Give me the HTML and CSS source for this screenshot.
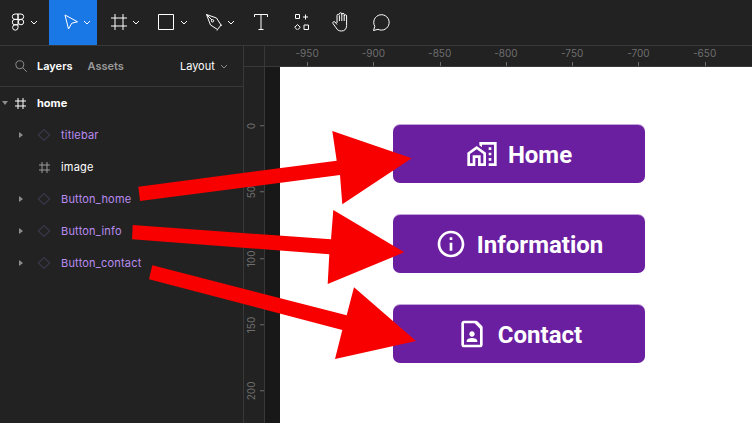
FILE: index.html
```html
<!DOCTYPE html>
<html lang="en">
<head>
    <meta charset="UTF-8">
    <meta name="viewport" content="width=device-width, initial-scale=1.0">
    <title>Figma - home</title>
    <link rel="stylesheet" href="styles.css">
</head>
<body>
    <div class="toolbar">
        <div class="tool tool-logo">
            <svg class="tool-icon" width="18" height="18" viewBox="0 0 18 18"><path d="M9 1H6a2.7 2.7 0 0 0 0 5.4h3zM9 1h3a2.7 2.7 0 0 1 0 5.4H9zM9 6.4H6a2.7 2.7 0 0 0 0 5.4h3zM14.7 9.100a2.700 2.700 0 1 1-5.400 0 2.700 2.700 0 0 1 5.400 0zM9 11.800H6a2.700 2.700 0 1 0 3 2.700z"/></svg>
            <svg class="chevron" width="8" height="5" viewBox="0 0 8 5"><path d="M1 1l3 3 3-3"/></svg>
        </div>
        <div class="tool tool-move">
            <svg class="tool-icon" width="16" height="16" viewBox="0 0 16 16"><path d="M2 1l12.500 6.800-5.700 1.400L5.500 15z"/></svg>
            <svg class="chevron" width="8" height="5" viewBox="0 0 8 5"><path d="M1 1l3 3 3-3"/></svg>
        </div>
        <div class="tool tool-frame">
            <svg class="tool-icon" width="16" height="16" viewBox="0 0 16 16"><path d="M4 0v16M12 0v16M0 4h16M0 12h16"/></svg>
            <svg class="chevron" width="8" height="5" viewBox="0 0 8 5"><path d="M1 1l3 3 3-3"/></svg>
        </div>
        <div class="tool tool-rect">
            <svg class="tool-icon" width="16" height="16" viewBox="0 0 16 16"><path d="M.5.5h15v15H.5z"/></svg>
            <svg class="chevron" width="8" height="5" viewBox="0 0 8 5"><path d="M1 1l3 3 3-3"/></svg>
        </div>
        <div class="tool tool-pen">
            <svg class="tool-icon" width="16" height="17" viewBox="0 0 16 17"><path d="M.5.500l10 3.500 4.500 7-3.500 4.500-7-4.500zM.5.500l5.500 5.500M11.500 15.500l-.5 1M15 11l1 .5"/><circle cx="6.500" cy="6.800" r="1.200"/></svg>
            <svg class="chevron" width="8" height="5" viewBox="0 0 8 5"><path d="M1 1l3 3 3-3"/></svg>
        </div>
        <div class="tool tool-text">
            <svg class="tool-icon" width="14" height="16" viewBox="0 0 14 16"><path d="M.5 3V.5h13V3M7 .5v15M4.500 15.500h5"/></svg>
        </div>
        <div class="tool tool-components">
            <svg class="tool-icon" width="16" height="16" viewBox="0 0 16 16"><path d="M1.500.5h4v4h-4zM11.500.5v5M9 3h5M3.500 10.500l2.800 2.800-2.800 2.700-2.800-2.700zM10 11h4.500v4.500H10z"/></svg>
        </div>
        <div class="tool tool-hand">
            <svg class="tool-icon" width="18" height="20" viewBox="0 0 18 20"><path d="M5 11V3.500a1.200 1.200 0 0 1 2.400 0V9m0-7a1.200 1.200 0 0 1 2.400 0v7m0-6.500a1.200 1.200 0 0 1 2.400 0V9m0-5a1.200 1.200 0 0 1 2.400 0v9.500c0 3.500-2 5.500-5 5.500-3 0-4.300-1-5.500-3.200L1 11.500c-.8-1.500 1-2.500 2-1.500l2 2.500"/></svg>
        </div>
        <div class="tool tool-comment">
            <svg class="tool-icon" width="18" height="17" viewBox="0 0 18 17"><path d="M1.500 16.500l1.300-4.200A7.700 7.700 0 1 1 6 15.300z"/></svg>
        </div>
    </div>

    <div class="workspace">
        <div class="panel">
            <div class="panel-tabs">
                <svg class="search-icon" width="12" height="12" viewBox="0 0 12 12"><circle cx="4.800" cy="4.800" r="4"/><path d="M7.800 7.800l4 4"/></svg>
                <span class="tab tab-active">Layers</span>
                <span class="tab">Assets</span>
                <span class="tab-layout">Layout</span>
                <svg class="chevron chevron-dim" width="8" height="5" viewBox="0 0 8 5"><path d="M1 1l3 3 3-3"/></svg>
            </div>
            <div class="layers">
                <div class="layer layer-root">
                    <span class="caret caret-down"></span>
                    <svg class="frame-icon" width="11" height="11" viewBox="0 0 11 11"><path d="M3 0v11M8 0v11M0 3h11M0 8h11"/></svg>
                    <span class="layer-name">home</span>
                </div>
                <div class="layer">
                    <span class="caret"></span>
                    <svg class="diamond" width="12" height="12" viewBox="0 0 12 12"><path d="M6 .5L11.500 6 6 11.500.5 6z"/></svg>
                    <span class="layer-name comp">titlebar</span>
                </div>
                <div class="layer">
                    <span class="caret caret-none"></span>
                    <svg class="frame-icon frame-dim" width="11" height="11" viewBox="0 0 11 11"><path d="M3 0v11M8 0v11M0 3h11M0 8h11"/></svg>
                    <span class="layer-name">image</span>
                </div>
                <div class="layer">
                    <span class="caret"></span>
                    <svg class="diamond" width="12" height="12" viewBox="0 0 12 12"><path d="M6 .5L11.500 6 6 11.500.5 6z"/></svg>
                    <span class="layer-name comp">Button_home</span>
                </div>
                <div class="layer">
                    <span class="caret"></span>
                    <svg class="diamond" width="12" height="12" viewBox="0 0 12 12"><path d="M6 .5L11.500 6 6 11.500.5 6z"/></svg>
                    <span class="layer-name comp">Button_info</span>
                </div>
                <div class="layer">
                    <span class="caret"></span>
                    <svg class="diamond" width="12" height="12" viewBox="0 0 12 12"><path d="M6 .5L11.500 6 6 11.500.5 6z"/></svg>
                    <span class="layer-name comp">Button_contact</span>
                </div>
            </div>
        </div>

        <div class="canvas">
            <div class="ruler-top">
                <div class="ruler-corner"></div>
                <div class="mark">-950</div>
                <div class="mark">-900</div>
                <div class="mark">-850</div>
                <div class="mark">-800</div>
                <div class="mark">-750</div>
                <div class="mark">-700</div>
                <div class="mark">-650</div>
            </div>
            <div class="canvas-body">
                <div class="ruler-left">
                    <div class="vmark">0</div>
                    <div class="vmark">50</div>
                    <div class="vmark">100</div>
                    <div class="vmark">150</div>
                    <div class="vmark">200</div>
                </div>
                <div class="gutter"></div>
                <div class="artboard">
                    <div class="btn">
                        <svg class="btn-icon" viewBox="0 0 24 24"><path d="M1 11v10h6v-6h2v6h6V11L8 6 1 11zm12 8h-2v-6H5v6H3v-7l5-3.500 5 3.500v7zM17 7h2v2h-2zM17 11h2v2h-2zM17 15h2v2h-2zM10 3v2.500l2 1.400V5h9v14h-4v2h6V3z"/></svg>
                        <span class="btn-label">Home</span>
                    </div>
                    <div class="btn">
                        <svg class="btn-icon" viewBox="0 0 24 24"><path d="M11 7h2v2h-2zm0 4h2v6h-2zm1-9C6.480 2 2 6.480 2 12s4.480 10 10 10 10-4.480 10-10S17.520 2 12 2zm0 18c-4.410 0-8-3.590-8-8s3.590-8 8-8 8 3.590 8 8-3.590 8-8 8z"/></svg>
                        <span class="btn-label">Information</span>
                    </div>
                    <div class="btn">
                        <svg class="btn-icon" viewBox="0 0 24 24"><path d="M14 4l4 4v12H6V4h8m.830-2H6c-1.100 0-2 .900-2 2v16c0 1.100.900 2 2 2h12c1.100 0 2-.900 2-2V7.170c0-.530-.210-1.040-.590-1.410l-3.170-3.170c-.380-.380-.890-.590-1.410-.590zM12 14c1.100 0 2-.900 2-2s-.900-2-2-2-2 .900-2 2 .900 2 2 2zm4 3.430c0-.810-.480-1.530-1.220-1.850-.850-.370-1.790-.580-2.780-.580s-1.930.210-2.780.580C8.480 15.900 8 16.620 8 17.430V18h8v-.570z"/></svg>
                        <span class="btn-label">Contact</span>
                    </div>
                </div>
            </div>
        </div>
    </div>

    <!-- red annotation arrows drawn over the whole window -->
    <svg class="arrows" width="752" height="423" viewBox="0 0 752 423">
        <polygon points="138.300,186.700 336.700,160.700 332.300,131 411.700,158.300 342.300,204.300 340,175 140,201"/>
        <polygon points="132.700,225 331,239.300 333.300,210 404.300,252.300 327.700,284 329.300,254.300 132,239.300"/>
        <polygon points="152.300,265.300 346.700,315.300 354,287.300 416,341 335,359 342.300,330 149,279.300"/>
    </svg>
</body>
</html>
```

FILE: styles.css
```css
html, body {
    margin: 0;
    padding: 0;
    height: 100%;
}
body {
    width: 752px;
    height: 423px;
    overflow: hidden;
    background-color: #222222;
    font-family: Inter, "Liberation Sans", sans-serif;
    color: #ffffff;
    display: flex;
    flex-direction: column;
}
.toolbar {
    height: 45px;
    flex: none;
    display: flex;
    background-color: #222222;
    border-bottom: 1px solid #383838;
}
.tool {
    height: 45px;
    padding-bottom: 1px;
    display: flex;
    align-items: center;
    flex: none;
    box-sizing: border-box;
}
.tool svg {
    flex: none;
}
.tool-icon {
    fill: none;
    stroke: #ffffff;
    stroke-width: 1;
}
.chevron {
    fill: none;
    stroke: #ffffff;
    stroke-width: 1;
}
.chevron-dim {
    stroke: #8c8c8c;
    margin-left: 5px;
}
.tool-logo {
    width: 49px;
    padding-left: 9px;
    gap: 3px;
}
.tool-move {
    width: 48px;
    padding-left: 14px;
    gap: 4px;
    background-color: #1a78e6;
}
.tool-frame {
    width: 48px;
    padding-left: 14px;
    gap: 5px;
}
.tool-rect {
    width: 48px;
    padding-left: 13px;
    gap: 6px;
}
.tool-pen {
    width: 48px;
    padding-left: 13px;
    gap: 5px;
}
.tool-text {
    width: 40px;
    padding-left: 13px;
}
.tool-components {
    width: 44px;
    padding-left: 13px;
}
.tool-hand {
    width: 40px;
    padding-left: 7px;
}
.tool-comment {
    width: 30px;
    padding-left: 7px;
}

.workspace {
    flex: 1;
    display: flex;
    min-height: 0;
}
.panel {
    width: 243px;
    flex: none;
    border-right: 1px solid #383838;
}
.panel-tabs {
    height: 40px;
    display: flex;
    align-items: center;
    padding-left: 15px;
    border-bottom: 1px solid #383838;
    font-size: 11px;
    font-weight: 600;
}
.search-icon {
    fill: none;
    stroke: #8c8c8c;
    stroke-width: 1;
    margin-right: 10px;
}
.tab {
    color: #999999;
    margin-right: 15px;
}
.tab-active {
    color: #ffffff;
}
.tab-layout {
    margin-left: 41px;
    font-weight: 400;
    color: #ffffff;
}
.layers {
    display: flex;
    flex-direction: column;
}
.layer {
    height: 32px;
    display: flex;
    align-items: center;
    font-size: 11px;
    letter-spacing: 0.2px;
    flex: none;
}
.layer-root {
    font-weight: 700;
    letter-spacing: 0;
}
.caret {
    width: 0;
    height: 0;
    margin-left: 19px;
    margin-right: 15px;
    border-left: 4px solid #8c8c8c;
    border-top: 3px solid transparent;
    border-bottom: 3px solid transparent;
}
.caret-down {
    margin-left: 2px;
    margin-right: 7px;
    border-left: 3px solid transparent;
    border-right: 3px solid transparent;
    border-top: 4px solid #8c8c8c;
    border-bottom: 0;
}
.caret-none {
    visibility: hidden;
}
.frame-icon {
    fill: none;
    stroke: #ffffff;
    stroke-width: 1;
    margin-right: 11px;
    flex: none;
}
.frame-dim {
    stroke: #9a9a9a;
    margin-left: 1px;
    margin-right: 11px;
}
.diamond {
    fill: none;
    stroke: #4c4263;
    stroke-width: 1;
    margin-right: 11px;
    flex: none;
}
.comp {
    color: #b98cf0;
}

.canvas {
    flex: 1;
    min-width: 0;
    display: flex;
    flex-direction: column;
}
.ruler-top {
    height: 20px;
    flex: none;
    display: flex;
    border-bottom: 1px solid #383838;
}
.ruler-corner {
    width: 20px;
    margin-right: 9px;
    flex: none;
    border-right: 1px solid #383838;
}
.mark {
    width: 66.250px;
    flex: none;
    box-sizing: border-box;
    text-align: center;
    font-size: 10px;
    line-height: 15px;
    color: #6e6e6e;
    position: relative;
}
.mark::after {
    content: "";
    position: absolute;
    left: 50%;
    bottom: 0;
    width: 1px;
    height: 4px;
    background-color: #6e6e6e;
}
.canvas-body {
    flex: 1;
    display: flex;
    min-height: 0;
}
.ruler-left {
    width: 20px;
    flex: none;
    box-sizing: content-box;
    border-right: 1px solid #383838;
    padding-top: 26px;
    overflow: hidden;
}
.vmark {
    height: 66.250px;
    box-sizing: border-box;
    display: flex;
    align-items: center;
    justify-content: center;
    position: relative;
    width: 20px;
    padding-left: 6px;
    font-size: 10px;
    color: #6e6e6e;
    writing-mode: vertical-rl;
    transform: rotate(180deg);
}
.vmark::after {
    content: "";
    position: absolute;
    left: 0;
    top: 50%;
    width: 4px;
    height: 1px;
    background-color: #6e6e6e;
}
.gutter {
    width: 15px;
    flex: none;
    background-color: #181818;
}
.artboard {
    flex: 1;
    background-color: #ffffff;
    padding: 58px 0 0 113px;
    display: flex;
    flex-direction: column;
    gap: 32px;
}
.btn {
    width: 252px;
    height: 58px;
    flex: none;
    box-sizing: border-box;
    background-color: #6a1fa0;
    border-radius: 7px;
    box-shadow: 0 -1px 0 rgba(106, 31, 160, 0.4);
    display: flex;
    align-items: center;
    justify-content: center;
    gap: 10px;
    font-family: Roboto, "Liberation Sans", sans-serif;
    font-weight: 700;
    font-size: 24px;
    color: #ffffff;
}
.btn-label {
    padding-top: 1px;
}
.btn-icon {
    width: 32px;
    height: 32px;
    fill: #ffffff;
    flex: none;
}
.arrows {
    position: absolute;
    top: 0;
    left: 0;
}
.arrows polygon {
    fill: #f80000;
}
```
